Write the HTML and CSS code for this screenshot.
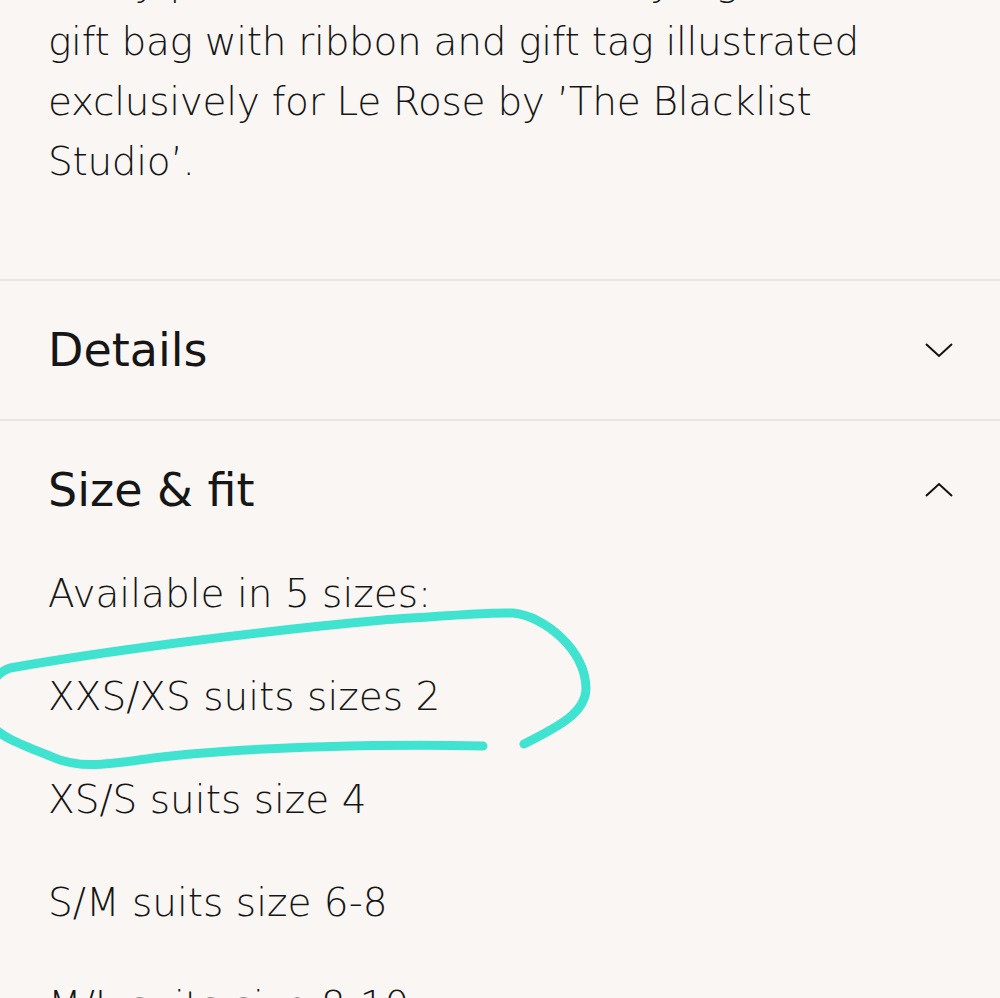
FILE: index.html
```html
<!DOCTYPE html>
<html lang="en">
<head>
    <meta charset="UTF-8">
    <meta name="viewport" content="width=device-width, initial-scale=1.0">
    <title>Le Rose - product info</title>
    <link rel="stylesheet" href="styles.css">
</head>
<body>
    <div class="page">
        <div class="description">
            <p>Every piece arrives in our luxury signature<br>
            gift bag with ribbon and gift tag illustrated<br>
            exclusively for Le Rose by ’The Blacklist<br>
            Studio’.</p>
        </div>

        <div class="accordion">
            <div class="acc-header">
                <h2>Details</h2>
                <svg class="chevron" width="30" height="18" viewBox="0 0 30 18">
                    <path d="M2 3 L15 15 L28 3" fill="none" stroke="#111" stroke-width="2"/>
                </svg>
            </div>
        </div>

        <div class="accordion open">
            <div class="acc-header">
                <h2>Size &amp; fit</h2>
                <svg class="chevron" width="30" height="18" viewBox="0 0 30 18">
                    <path d="M2 15 L15 3 L28 15" fill="none" stroke="#111" stroke-width="2"/>
                </svg>
            </div>
            <ul class="sizes">
                <li>Available in 5 sizes:</li>
                <li>XXS/XS suits sizes 2</li>
                <li>XS/S suits size 4</li>
                <li>S/M suits size 6-8</li>
                <li>M/L suits size 8-10</li>
            </ul>
        </div>
    </div>

    <!-- hand drawn highlight on top of the page -->
    <svg class="scribble" width="1000" height="998" viewBox="0 0 1000 998">
        <path d="M483 746 C400 744 250 746 153 758 C110 764 80 770 50 756 C20 744 4 738 -6 728 C-20 700 -10 675 10 668 C100 652 250 632 383 620 C440 616 490 612 513 613 C545 616 585 650 586 688 C586 712 560 726 524 744"
              fill="none" stroke="#3fe3cf" stroke-width="9" stroke-linecap="round" stroke-linejoin="round"/>
    </svg>
</body>
</html>
```

FILE: styles.css
```css
body {
    margin: 0;
    background-color: #faf6f3;
    color: #161616;
    font-family: "DejaVu Sans", "Liberation Sans", sans-serif;
    position: relative;
    height: 998px;
    overflow: hidden;
}

.page {
    margin-top: -48px;
}

.description {
    padding: 0 48px 87px 48px;
    border-bottom: 2px solid #e9e5e1;
}

.description p {
    margin: 0;
    font-size: 39px;
    line-height: 60px;
    font-weight: 300;
    letter-spacing: -0.3px;
    white-space: nowrap;
}

.accordion {
    border-bottom: 2px solid #e9e5e1;
}

.accordion.open {
    border-bottom: none;
}

.acc-header {
    display: flex;
    align-items: center;
    justify-content: space-between;
    height: 138px;
    padding: 0 46px 0 48px;
}

.acc-header h2 {
    margin: 0;
    font-size: 46px;
    font-weight: 400;
}

.chevron {
    display: block;
}

.sizes {
    list-style-type: none;
    margin: 0;
    padding: 5px 48px 0 48px;
}

.sizes li {
    font-size: 39px;
    line-height: 60px;
    margin-bottom: 43px;
    font-weight: 300;
}

.scribble {
    position: absolute;
    top: 0;
    left: 0;
    pointer-events: none;
}
```
